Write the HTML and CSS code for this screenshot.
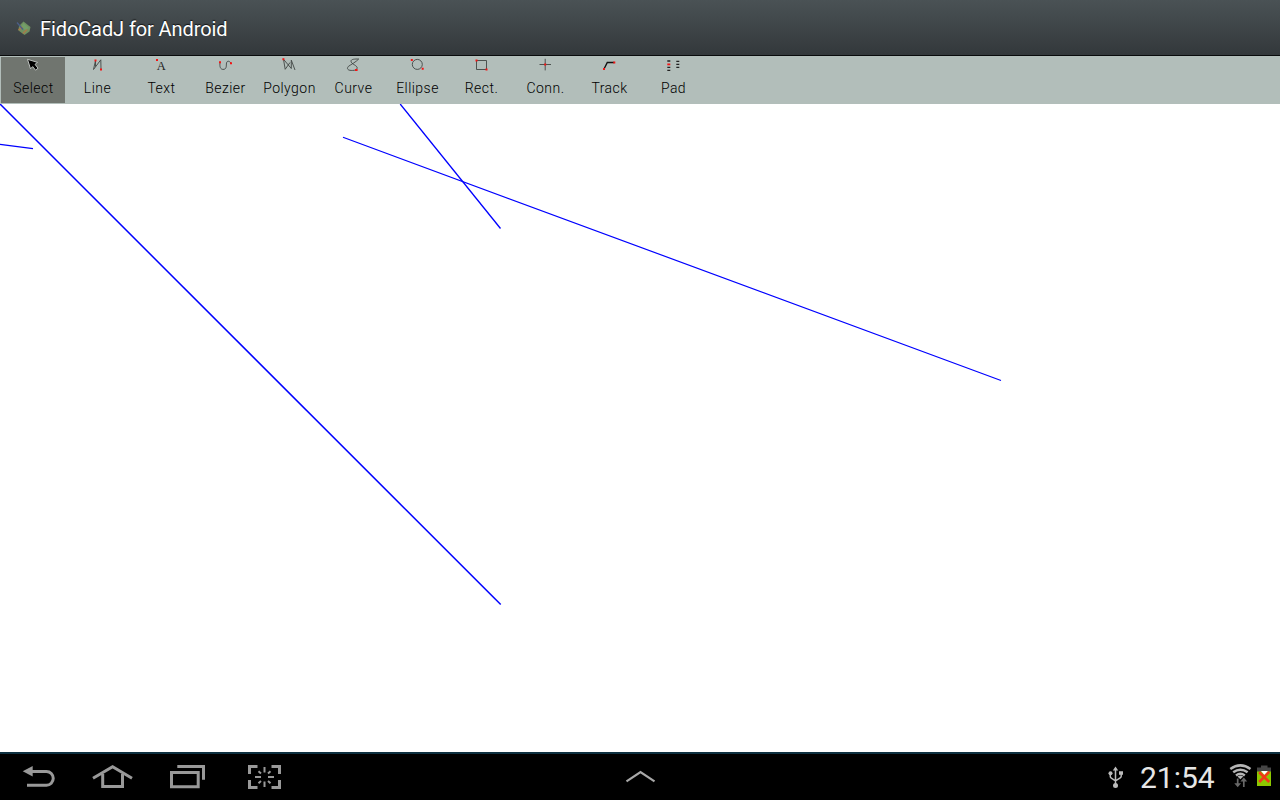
FILE: index.html
```html
<!DOCTYPE html>
<html lang="en">
<head>
<meta charset="utf-8">
<title>FidoCadJ for Android</title>
<link rel="stylesheet" href="styles.css">
</head>
<body>
<header class="titlebar">
  <svg class="logo" width="18" height="18" viewBox="0 0 18 18">
    <path d="M8.500 1.500L15.500 7 14.500 11.500 9.500 15 3.500 10.500 4 6Z" fill="#6f9060"/>
    <path d="M8.500 3L14 8 10 10 6 7Z" fill="#739e68"/>
    <path d="M3.500 10l4-3M8 13.500l4-4" stroke="#a67a48" stroke-width="1.600"/>
    <path d="M2 2.500l6 7" stroke="#4b5f88" stroke-width="1.300"/>
  </svg>
  <h1 class="title">FidoCadJ for Android</h1>
</header>
<nav class="toolbar">
  <div class="tool selected">
    <svg class="icon" viewBox="0 0 20 16"><path d="M4.500 2.300L14.500 5.400 12 7.400 15 11.200 12.600 13.200 9.700 9.600 7.500 11.800Z" fill="#000" stroke="#c8cdca" stroke-width=".9"/></svg>
    <span class="label">Select</span>
  </div>
  <div class="tool">
    <svg class="icon" viewBox="0 0 20 16"><path class="pen" d="M8.500 3.600L6.500 12.500 13.800 2.800 14 12.300M8.500 3.600V9.500"/><path class="dot" d="M7.500 2.600h2v2h-2zM13 11.400h2v2h-2z"/></svg>
    <span class="label">Line</span>
  </div>
  <div class="tool">
    <svg class="icon" viewBox="0 0 20 16"><text class="glyph" x="10.200" y="13" text-anchor="middle">A</text><path class="dot" d="M5 2h2v2H5z"/></svg>
    <span class="label">Text</span>
  </div>
  <div class="tool">
    <svg class="icon" viewBox="0 0 20 16"><path class="pen" d="M5 5.500C4.500 10 5.500 12.300 8 12.400 11.500 12.500 11.300 9.500 11.400 7 11.500 3.500 14 3.500 16 6"/><path class="dot" d="M4 4.300h2v2H4zM15 5.300h2v2h-2z"/></svg>
    <span class="label">Bezier</span>
  </div>
  <div class="tool">
    <svg class="icon" viewBox="0 0 20 16"><path class="pen" d="M4.500 2.300L12.300 11.500 12.300 3.200 16 13M4.500 2.300L6.200 12.300 11 5.500"/><path class="dot" d="M3.400 1.200h2v2h-2z"/></svg>
    <span class="label">Polygon</span>
  </div>
  <div class="tool">
    <svg class="icon" viewBox="0 0 20 16"><path class="pen" d="M13.300 13C5 14.500 3 12 5.500 9.300 8 7.500 13 5 15.700 2 12 2 8 2 8 4.200 8 7 14.500 8.500 14.200 11L13.300 13"/><path class="dot" d="M12 12h2.600v2H12z"/></svg>
    <span class="label">Curve</span>
  </div>
  <div class="tool">
    <svg class="icon" viewBox="0 0 20 16"><circle class="pen" cx="10.300" cy="7.400" r="5"/><path class="dot" d="M3.800 2h2v2h-2zM14.700 10.700h2v2h-2z"/></svg>
    <span class="label">Ellipse</span>
  </div>
  <div class="tool">
    <svg class="icon" viewBox="0 0 20 16"><path class="pen" d="M5.500 3.500h10v9h-10z"/><path class="dot" d="M4.500 2.600h2v2h-2zM14.500 11.400h2v2h-2z"/></svg>
    <span class="label">Rect.</span>
  </div>
  <div class="tool">
    <svg class="icon" viewBox="0 0 20 16"><path class="pen" d="M4.500 7.500h11.500M10.200 1.800v11.600"/><path class="dot" d="M9.200 6.500h2v2h-2z"/></svg>
    <span class="label">Conn.</span>
  </div>
  <div class="tool">
    <svg class="icon" viewBox="0 0 20 16"><path d="M5 12L8.300 5.500H15.300" fill="none" stroke="#111" stroke-width="1.400"/><path class="dot" d="M4 11h2v2H4zM14.300 4.500h2v2h-2z"/></svg>
    <span class="label">Track</span>
  </div>
  <div class="tool">
    <svg class="icon" viewBox="0 0 20 16"><path d="M4.300 4h3M4.300 10.400h3M4.300 13.400h3M13.300 4.400h3M13.300 7.400h3M13.300 10.400h3" stroke="#222" stroke-width="1.400"/><path class="dot" d="M4.300 6.500h3v1.800h-3z"/></svg>
    <span class="label">Pad</span>
  </div>
</nav>
<main class="drawing">
  <svg class="sheet" width="1280" height="648" viewBox="0 0 1280 648">
    <path d="M0 0L500.700 500.500" stroke-width="1.500"/>
    <path d="M0 40.400L33 44.600M343 33.300L1001 276.500"/>
    <path d="M400.200 0L500.500 124.500" stroke-width="1.300"/>
  </svg>
</main>
<footer class="sysbar">
  <div class="keys">
    <svg width="38" height="46" viewBox="20 754 38 46"><path d="M22.700 771.300L32.700 766v10.600z" fill="#999"/><path class="key" d="M31 771.400h15.500a6.700 6.900 0 0 1 0 13.900H27"/></svg>
    <svg width="44" height="46" viewBox="91 754 44 46"><path class="key" d="M93 778.300L112.600 766.800 132 778.300M102.700 774v12.500h19.800V774"/></svg>
    <svg width="40" height="46" viewBox="168 754 40 46"><path class="key" d="M171.500 772.500h26.700v14.300h-26.700zM177.300 766.500h26.200v13.300"/></svg>
    <svg width="38" height="46" viewBox="246 754 38 46"><path class="key" d="M249.500 774v-7.500h8M271.500 766.500h8v7.500M279.500 780v7.500h-8M257.500 787.500h-8V780"/><path d="M264.500 767v5.500M264.500 781.500v5.500M255 777h6M268 777h6M258.500 771.300l2.500 2.200M270.500 771.300l-2.500 2.200M258.500 783.200l2.500-2.200M270.500 783.200l-2.500-2.200" stroke="#999" stroke-width="2"/></svg>
  </div>
  <svg class="chevron" width="32" height="46" viewBox="624 754 32 46"><path d="M626.500 781.300L640.500 772 654.500 781.300" fill="none" stroke="#a8a8a8" stroke-width="2.200"/></svg>
  <div class="status">
    <svg width="18" height="46" viewBox="1107 754 18 46"><path d="M1115.500 769v17M1110.300 773v3.500q0 1 1 1.600l4.200 2.800 4.700-3q1-.6 1-1.600V773" fill="none" stroke="#bbb" stroke-width="1.500"/><path d="M1115.500 766.500l2.700 4h-5.400zM1119 771.300h4v3.500h-4z" fill="#bbb"/><circle cx="1110.500" cy="773.300" r="2" fill="#bbb"/><circle cx="1115.500" cy="785.400" r="2.500" fill="#bbb"/></svg>
    <time class="clock">21:54</time>
    <svg class="signal" width="44" height="46" viewBox="1229 754 44 46">
      <g fill="none" stroke="#b5b5b5" stroke-width="2.500"><path d="M1230.300 769q10.100-7.200 20.200 0"/><path d="M1233.200 772.300q7.200-5.200 14.400 0"/><path d="M1236 775.400q4.400-3.200 8.800 0"/></g>
      <path d="M1237.500 776.500q2.900-1.800 5.800 0l-2.900 2.700z" fill="#b5b5b5"/>
      <path d="M1237.700 778.500v6M1243.800 787v-7" stroke="#686868" stroke-width="1.700"/><path d="M1234.300 783.300h6.800l-3.400 4zM1240.400 781.500h6.800l-3.400-4z" fill="#686868"/>
      <path d="M1261 765.500h6.500v2h3.500v5h-14v-5h4z" fill="#454545"/><path d="M1257 771.500h14v14.500h-14z" fill="#8cc800"/><path d="M1261 771h7l-3.500 4z" fill="#fff"/><path d="M1259.200 772.300l10 9.700M1269.200 771.800l-10 10.200" stroke="#f13a18" stroke-width="2.600"/>
    </svg>
  </div>
</footer>
</body>
</html>
```
FILE: styles.css
```css
* { box-sizing: border-box; }

body {
  margin: 0;
  width: 1280px;
  height: 800px;
  display: flex;
  flex-direction: column;
  overflow: hidden;
  background: #fff;
  font-family: Roboto, "Noto Sans", sans-serif;
}

svg { display: block; flex: none; }

.titlebar {
  height: 56px;
  flex: none;
  display: flex;
  align-items: center;
  padding: 2px 0 0 15px;
  background: linear-gradient(#4a5255, #33383b);
  border-bottom: 1px solid #090b0c;
}

.logo { margin-right: 7px; }

.title {
  margin: 0;
  font-size: 20px;
  font-weight: 400;
  line-height: 24px;
  letter-spacing: -0.1px;
  color: #fff;
  text-shadow: 0 -1px 1px #111;
}

.toolbar {
  height: 48px;
  flex: none;
  display: flex;
  padding: 1px 0 1px 1px;
  background: #b2beba;
}

.tool {
  width: 64px;
  height: 46px;
  display: flex;
  flex-direction: column;
  align-items: center;
}

.selected { background: #70756f; }

.icon { width: 20px; height: 16px; }

.pen { fill: none; stroke: #414644; stroke-width: 0.9; }

.dot { fill: #f51414; }

.glyph { font: 12.5px "Liberation Serif", serif; fill: #222; }

.label {
  margin-top: 7px;
  padding-left: 1px;
  font-size: 14px;
  font-weight: 300;
  line-height: 16px;
  letter-spacing: 0.45px;
  color: #000;
}

.drawing { height: 648px; flex: none; }

.sheet { fill: none; stroke: #00f; stroke-width: 1.2; }

.sysbar {
  height: 48px;
  flex: none;
  display: grid;
  grid-template-columns: 1fr 32px 1fr;
  background: #000;
  border-top: 2px solid #0d3040;
}

.keys { display: flex; gap: 33px; padding-left: 20px; }

.keys svg:nth-child(3) { margin-right: 5px; }

.key { fill: none; stroke: #999; stroke-width: 3; }

.status {
  display: flex;
  justify-content: flex-end;
  padding-right: 7px;
}

.clock {
  width: 76px;
  margin: 0 13px 0 15px;
  font-size: 30px;
  line-height: 47px;
  letter-spacing: 0;
  color: #e6e6e6;
}
```
